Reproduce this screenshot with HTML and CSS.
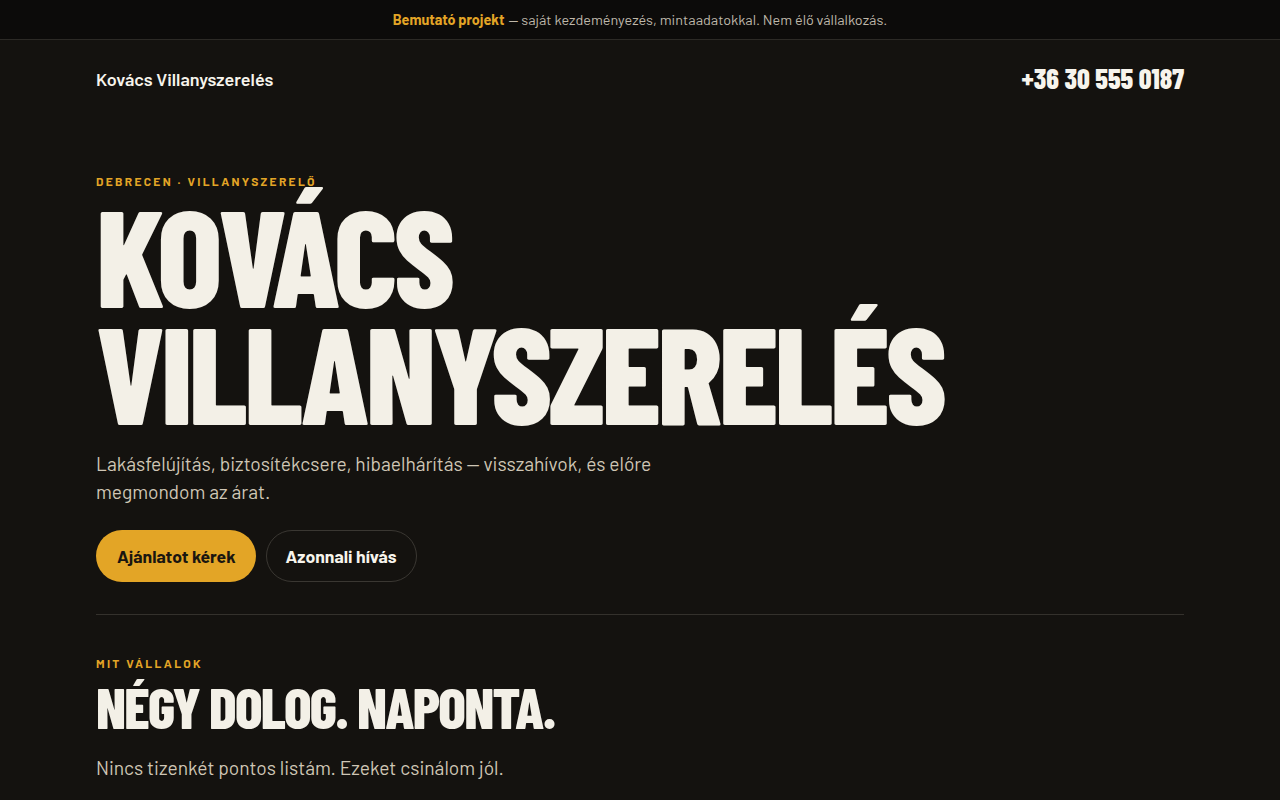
FILE: index.html
```html
<!DOCTYPE html>
<html lang="hu">
<head>
<meta charset="utf-8">
<title>Kovács Villanyszerelés</title>
<link rel="stylesheet" href="styles.css">
</head>
<body>
<div class="demo-bar"><strong>Bemutató projekt</strong> — saját kezdeményezés, mintaadatokkal. Nem élő vállalkozás.</div>
<div class="wrap">
  <header class="site-header">
    <a class="brand" href="#">Kovács Villanyszerelés</a>
    <a class="phone" href="#">+36 30 555 0187</a>
  </header>
  <section class="hero">
    <p class="eyebrow">Debrecen · Villanyszerelő</p>
    <h1 class="hero-title">Kovács<br>Villanyszerelés</h1>
    <p class="lead">Lakásfelújítás, biztosítékcsere, hibaelhárítás — visszahívok, és előre megmondom az árat.</p>
    <div class="actions">
      <a class="btn btn-primary" href="#">Ajánlatot kérek</a>
      <a class="btn btn-ghost" href="#">Azonnali hívás</a>
    </div>
  </section>
  <section class="services">
    <p class="eyebrow">Mit vállalok</p>
    <h2 class="section-title">Négy dolog. Naponta.</h2>
    <p class="lead">Nincs tizenkét pontos listám. Ezeket csinálom jól.</p>
  </section>
</div>
</body>
</html>
```
FILE: styles.css
```css
* { box-sizing: border-box; }
html, body { margin: 0; padding: 0; }
body {
  background: #14120f;
  color: #f2efe6;
  font-family: "Barlow", "Roboto", "Liberation Sans", sans-serif;
  -webkit-font-smoothing: antialiased;
}
a { color: inherit; text-decoration: none; }
p, h1, h2 { margin: 0; }

.demo-bar {
  background: #0c0b0a;
  border-bottom: 1px solid #2c2a26;
  height: 40px;
  display: flex;
  align-items: center;
  justify-content: center;
  font-size: 14.4px;
  color: #bfb8aa;
}
.demo-bar strong { color: #e3a526; font-weight: 700; margin-right: 4px; }

.wrap {
  max-width: 1088px;
  margin: 0 auto;
}

.site-header {
  display: flex;
  justify-content: space-between;
  align-items: center;
  padding: 23px 0 25px;
}
.brand {
  font-size: 18px;
  font-weight: 600;
  color: #f7f4ec;
}
.phone {
  font-family: "Barlow Condensed", "Roboto", sans-serif;
  font-size: 28px;
  font-weight: 800;
  line-height: 31px;
  color: #f7f4ec;
}

.eyebrow {
  font-size: 12px;
  line-height: 16px;
  font-weight: 700;
  letter-spacing: 2.3px;
  text-transform: uppercase;
  color: #e3a526;
}

.hero { padding-top: 54px; padding-bottom: 32px; border-bottom: 1px solid #34312c; }
.hero-title {
  margin-top: 6px;
  font-family: "Barlow Condensed", "Roboto", sans-serif;
  font-weight: 800;
  font-size: 136px;
  line-height: 117px;
  letter-spacing: -0.03em;
  text-transform: uppercase;
  color: #f3f0e7;
}
.lead {
  font-size: 19.2px;
  line-height: 28px;
  color: #cfc6b5;
  max-width: 580px;
}
.hero .lead { margin-top: 21px; }

.actions { display: flex; gap: 10px; margin-top: 24px; }
.btn {
  display: inline-flex;
  align-items: center;
  justify-content: center;
  height: 52px;
  padding: 0 20px 0 21px;
  border-radius: 26px;
  font-size: 17.6px;
  font-weight: 700;
}
.btn-primary { background: #e3a526; color: #1a1610; }
.btn-ghost { border: 1px solid #3a3732; color: #f7f4ec; padding: 0 19px; }

.services { padding-top: 40px; }
.section-title {
  margin-top: 6px;
  font-family: "Barlow Condensed", "Roboto", sans-serif;
  font-weight: 800;
  font-size: 57.6px;
  line-height: 58px;
  letter-spacing: -0.03em;
  text-transform: uppercase;
  color: #f3f0e7;
}
.services .lead { margin-top: 19px; }
```
